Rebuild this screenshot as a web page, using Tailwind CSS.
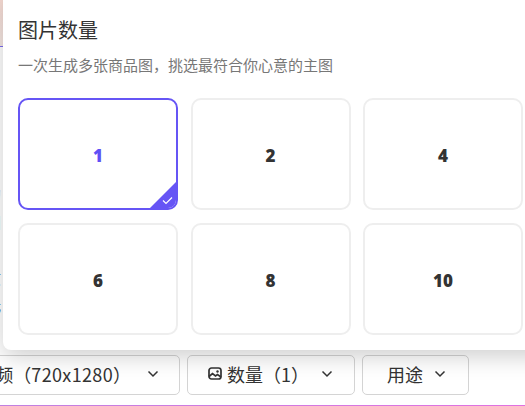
<!DOCTYPE html>
<html lang="zh-CN">
<head>
    <meta charset="UTF-8">
    <title>图片数量</title>
    <script src="https://cdn.jsdelivr.net/npm/@tailwindcss/browser@4"></script>
</head>
<body class="bg-white">
    <div class="relative w-[525px] h-[406px] overflow-hidden font-['Noto_Sans_CJK_SC','Noto_Sans',sans-serif]">
        <!-- page behind the popover -->
        <div class="flex flex-col h-full">
            <div class="h-[47px] shrink-0 bg-gradient-to-b from-[#f8dcd4] to-[#f5e8e4] border-b border-[#7c6cf0]"></div>
            <div class="flex-1"></div>
            <div class="flex gap-[7px] ml-[-60px] h-[40px] text-[18px] text-[#333] leading-none">
                <div class="w-[240px] flex items-center justify-end gap-[16px] pr-[20px] pb-[3px] bg-white/30 border border-[#d4d4d4] rounded-[5px]">
                    <span>视频（<span class="tracking-[0.35px]">720x1280</span>）</span>
                    <svg width="12" height="8" viewBox="0 0 12 8" fill="none" stroke="#333" stroke-width="1.5"><path d="M1.5 1.5 6 6l4.5-4.5"/></svg>
                </div>
                <div class="w-[168px] flex items-center gap-[5px] pl-[20px] pb-[3px] bg-white/30 border border-[#d4d4d4] rounded-[5px]">
                    <svg width="14" height="13" viewBox="0 0 14 13" fill="none" stroke="#333" stroke-width="1.7"><rect x="1" y="1" width="12" height="11" rx="2.5"/><path d="M1 9.5l3.5-3 3 2.5 2-1.5 3.5 2.5"/><circle cx="9.5" cy="4.5" r="1.2" fill="#333" stroke="none"/></svg>
                    <span>数量（1）</span>
                    <svg class="ml-[7px]" width="12" height="8" viewBox="0 0 12 8" fill="none" stroke="#333" stroke-width="1.5"><path d="M1.5 1.5 6 6l4.5-4.5"/></svg>
                </div>
                <div class="w-[107px] flex items-center gap-[11px] pl-[24px] pb-[3px] bg-white/30 border border-[#d4d4d4] rounded-[5px]">
                    <span>用途</span>
                    <svg width="12" height="8" viewBox="0 0 12 8" fill="none" stroke="#333" stroke-width="1.5"><path d="M1.5 1.5 6 6l4.5-4.5"/></svg>
                </div>
            </div>
            <div class="h-[10px] shrink-0"></div>
            <div class="h-px shrink-0 bg-gradient-to-r from-[#c080e0] to-[#e070e0]"></div>
        </div>

        <!-- text cut off by the popover -->
        <div class="absolute left-[-15px] top-[186px] text-[16px] leading-none text-[#a06020]">的</div>
        <div class="absolute left-[-15px] top-[214px] text-[16px] leading-none text-[#205030]">田</div>
        <div class="absolute left-[-15px] top-[269px] text-[16px] leading-none text-[#334]">质</div>
        <div class="absolute left-[-15px] top-[296px] text-[16px] leading-none text-[#334]">光</div>

        <!-- popover -->
        <div class="absolute left-[3px] top-[-10px] w-[560px] h-[360px] bg-white rounded-[8px] shadow-[0_6px_24px_rgba(0,0,0,0.2)] pt-[26px] pl-[15px]">
            <h2 class="text-[20px] leading-[28px] text-[#333]">图片数量</h2>
            <p class="mt-[10px] text-[15px] leading-[22px] text-[#777]">一次生成多张商品图，挑选最符合你心意的主图</p>
            <div class="mt-[22px] grid grid-cols-[160px_160px_160px] gap-x-[12.5px] gap-y-[13px] font-['Open_Sans',sans-serif] text-[17px] font-extrabold text-[#333]">
                <div class="relative h-[112px] pt-[4px] flex items-center justify-center rounded-[10px] border-2 border-[#6655f5] text-[#5f50f5] overflow-hidden">
                    1
                    <div class="absolute right-0 bottom-0 w-[26px] h-[26px] bg-[#6655f5] [clip-path:polygon(100%_0,100%_100%,0_100%)]">
                        <svg class="absolute right-[3px] bottom-[3px]" width="11" height="9" viewBox="0 0 11 9" fill="none" stroke="#fff" stroke-width="1.2"><path d="M1 4.5 4 7.5 10 1.5"/></svg>
                    </div>
                </div>
                <div class="h-[112px] pt-[4px] flex items-center justify-center rounded-[10px] border-2 border-[#eeeeee]">2</div>
                <div class="h-[112px] pt-[4px] flex items-center justify-center rounded-[10px] border-2 border-[#eeeeee]">4</div>
                <div class="h-[112px] pt-[4px] flex items-center justify-center rounded-[10px] border-2 border-[#eeeeee]">6</div>
                <div class="h-[112px] pt-[4px] flex items-center justify-center rounded-[10px] border-2 border-[#eeeeee]">8</div>
                <div class="h-[112px] pt-[4px] flex items-center justify-center rounded-[10px] border-2 border-[#eeeeee]">10</div>
            </div>
        </div>
    </div>
</body>
</html>
